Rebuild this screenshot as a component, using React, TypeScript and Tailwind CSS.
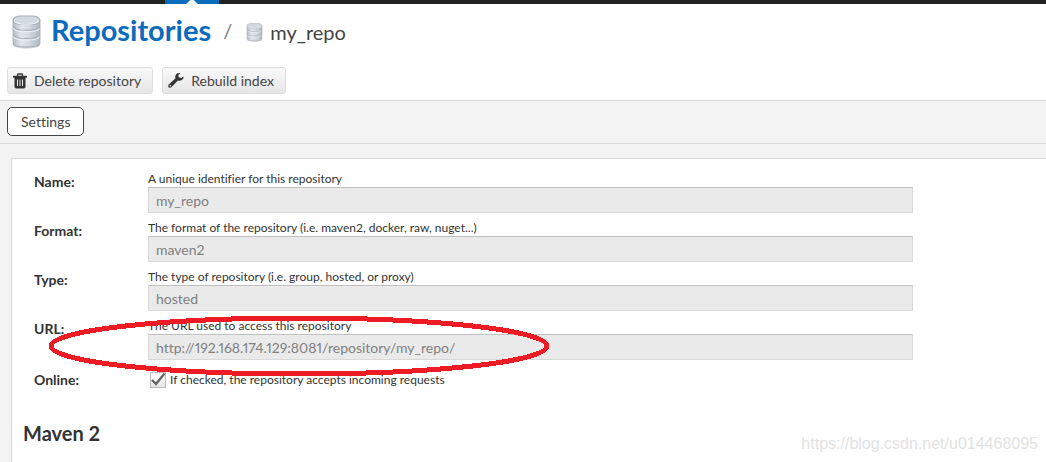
import React, { useId, useState } from "react";

type Field = {
  id: string;
  label: string;
  help: string;
  value: string;
  marked?: boolean;
};

const fields: Field[] = [
  {
    id: "name",
    label: "Name:",
    help: "A unique identifier for this repository",
    value: "my_repo",
  },
  {
    id: "format",
    label: "Format:",
    help: "The format of the repository (i.e. maven2, docker, raw, nuget...)",
    value: "maven2",
  },
  {
    id: "type",
    label: "Type:",
    help: "The type of repository (i.e. group, hosted, or proxy)",
    value: "hosted",
  },
  {
    id: "url",
    label: "URL:",
    help: "The URL used to access this repository",
    value: "http://192.168.174.129:8081/repository/my_repo/",
    marked: true,
  },
];

const DatabaseIcon: React.FC<{ className: string }> = ({ className }) => {
  const id = useId();
  return (
    <svg viewBox="0 0 28 33" className={className} aria-hidden="true">
      <defs>
        <linearGradient id={id} x1="0" x2="1" y1="0" y2="0">
          <stop offset="0" stopColor="#b3bbc4" />
          <stop offset="0.3" stopColor="#e1e6ea" />
          <stop offset="0.6" stopColor="#d2d9df" />
          <stop offset="1" stopColor="#afb8c1" />
        </linearGradient>
      </defs>
      <ellipse cx="14" cy="29" rx="13" ry="3.5" fill="#c9cccf" />
      <path
        d="M1 5v22c0 2.500 5 4 13 4s13-1.500 13-4V5z"
        fill={`url(#${id})`}
        stroke="#a5aeb8"
      />
      <path
        d="M1.500 11.500c1 2.500 6 3.300 12.500 3.300s11.500-.8 12.500-3.300M1.500 19.500c1 2.500 6 3.300 12.500 3.300s11.500-.8 12.500-3.300"
        fill="none"
        stroke="#a0aab5"
      />
      <path
        d="M1.500 13c1 2.500 6 3.300 12.500 3.300s11.500-.8 12.500-3.300M1.500 21c1 2.500 6 3.300 12.500 3.300s11.500-.8 12.500-3.300"
        fill="none"
        stroke="#f3f6f8"
      />
      <rect x="1" y="1" width="26" height="8" rx="7" ry="4" fill="#d3dae0" stroke="#a5aeb8" />
      <path d="M2 5.500c1 2.500 6 3.500 12 3.500s11-1 12-3.500" fill="none" stroke="#f3f6f8" />
    </svg>
  );
};

const TrashIcon = () => (
  <svg viewBox="0 0 14 16" className="h-4 w-[14px]" aria-hidden="true">
    <path d="M4.500 3V1.800Q4.500 1 5.300 1h3.400q.8 0 .8.8V3" fill="none" stroke="#333" strokeWidth="1.300" />
    <rect x="0" y="2.700" width="14" height="2" rx=".6" fill="#333" />
    <path d="M1.500 4h11v9.800q0 1.700-1.700 1.700H3.200q-1.700 0-1.700-1.700z" fill="#333" />
    <path d="M4.500 6.500v6.500M7 6.500v6.500M9.500 6.500v6.500" stroke="#eee" />
  </svg>
);

const WrenchIcon = () => (
  <svg viewBox="0 0 17 17" className="h-[17px] w-4" aria-hidden="true">
    <path
      fillRule="evenodd"
      fill="#333"
      d="M13.300.7C10.500-.3 7.800 1.600 7.700 4.300c0 .7.100 1.200.3 1.700L.9 12.700c-1 1-1 2.200-.2 3 .9.900 2.200.8 3.100-.2l6.700-7c2.900 1 6.200-.8 6.200-4.200l-2.700 1.500-2.600-.7-.5-2.500zM2.400 13.200a.9.900 0 1 1 0 1.800.9.900 0 0 1 0-1.800z"
    />
  </svg>
);

const ToolButton: React.FC<{ icon: React.ReactNode; children: string }> = ({
  icon,
  children,
}) => (
  <button
    type="button"
    className="flex h-[27px] items-center gap-[7px] rounded-[3px] border border-[#dedede] bg-linear-to-b from-[#f9f9f9] to-[#e6e6e6] pr-[11px] pl-[5px] text-sm text-[#444]"
  >
    {icon}
    {children}
  </button>
);

const FieldRow: React.FC<{ field: Field }> = ({ field }) => (
  <div className="relative flex">
    <label
      htmlFor={field.id}
      className="w-[114px] shrink-0 pt-0.5 text-sm leading-[18px] font-bold text-[#333]"
    >
      {field.label}
    </label>
    <div className="min-w-0 flex-1">
      <p id={`${field.id}-help`} className="text-xs leading-4 text-[#333]">
        {field.help}
      </p>
      <input
        id={field.id}
        type="text"
        readOnly
        value={field.value}
        aria-describedby={`${field.id}-help`}
        className="block h-[26px] w-full border border-[#d9d9d9] border-t-[#c0c0c0] bg-[#eaeaea] px-[7px] text-sm text-[#808080] proportional-nums outline-none"
      />
    </div>
    {field.marked && (
      <svg
        viewBox="0 0 502 62"
        className="pointer-events-none absolute -top-[3px] left-[14px] h-[62px] w-[502px]"
        shapeRendering="crispEdges"
        aria-hidden="true"
      >
        <ellipse cx="251" cy="31" rx="248" ry="28" fill="none" stroke="#ed1c24" strokeWidth="5" />
      </svg>
    )}
  </div>
);

export default function App() {
  const [online, setOnline] = useState(true);

  return (
    <div className="relative flex min-h-screen flex-col bg-[#f3f3f3] font-['Lato',sans-serif] [font-variant-ligatures:none]">
      <div className="flex h-1 bg-[#222] pl-[165px]">
        <div className="flex w-[54px] justify-center bg-[#0b6bbd]">
          <svg viewBox="0 0 12 4" className="h-1 w-3" aria-hidden="true">
            <path d="M0 4 4.500 0h3L12 4z" fill="#fff" />
          </svg>
        </div>
      </div>

      <header className="border-b border-[#d9d9d9] bg-white pb-1.5">
        <div className="flex h-[63px] items-start pt-2 pl-3">
          <DatabaseIcon className="mt-[3px] h-[34px] w-[29px]" />
          <h1 className="ml-[10px] text-[29px] leading-9 font-bold text-[#0b6bbd]">
            <a href="#repositories">Repositories</a>
          </h1>
          <span className="ml-3 text-xl leading-9 text-[#777]">/</span>
          <DatabaseIcon className="mt-[11px] ml-[14px] h-[19px] w-[17px]" />
          <span className="ml-[7px] text-xl leading-10 text-[#444]">my_repo</span>
        </div>
        <div className="flex gap-[9px] pl-[7px]">
          <ToolButton icon={<TrashIcon />}>Delete repository</ToolButton>
          <ToolButton icon={<WrenchIcon />}>Rebuild index</ToolButton>
        </div>
      </header>

      <nav className="border-b border-[#d9d9d9] px-[7px] pt-1.5 pb-[7px]">
        <button
          type="button"
          className="block h-[29px] rounded-[5px] border border-[#444] bg-white px-[13px] text-sm text-[#444]"
        >
          Settings
        </button>
      </nav>

      <main className="mt-[14px] ml-[11px] flex-1 border-t border-l border-[#d9d9d9] bg-white pt-3">
        <form className="flex flex-col gap-[7px] pr-[133px] pl-[22px]">
          {fields.map((field) => (
            <FieldRow key={field.id} field={field} />
          ))}
          <div className="flex pt-0.5">
            <label
              htmlFor="online"
              className="w-[114px] shrink-0 pt-0.5 text-sm leading-[18px] font-bold text-[#333]"
            >
              Online:
            </label>
            <div className="flex items-center gap-1 pt-0.5 pl-0.5">
              <span className="grid size-4">
                <input
                  id="online"
                  type="checkbox"
                  checked={online}
                  onChange={(e) => setOnline(e.target.checked)}
                  className="col-start-1 row-start-1 size-4 appearance-none border border-[#bbb] bg-linear-to-b from-white to-[#e6e6e6]"
                />
                {online && (
                  <svg
                    viewBox="0 0 16 16"
                    className="pointer-events-none col-start-1 row-start-1 size-4"
                    aria-hidden="true"
                  >
                    <path d="m2 8 4 4L14.500 1.500" fill="none" stroke="#666" strokeWidth="2.400" />
                  </svg>
                )}
              </span>
              <label htmlFor="online" className="text-xs text-[#333]">
                If checked, the repository accepts incoming requests
              </label>
            </div>
          </div>
        </form>
        <h2 className="mt-8 pl-[11px] text-xl leading-6 font-bold text-[#333]">
          Maven 2
        </h2>
      </main>

      <span className="absolute right-2 bottom-2 font-['Liberation_Sans',sans-serif] text-base leading-5 text-[#e2e2e2]">
        https://blog.csdn.net/u014468095
      </span>
    </div>
  );
}
